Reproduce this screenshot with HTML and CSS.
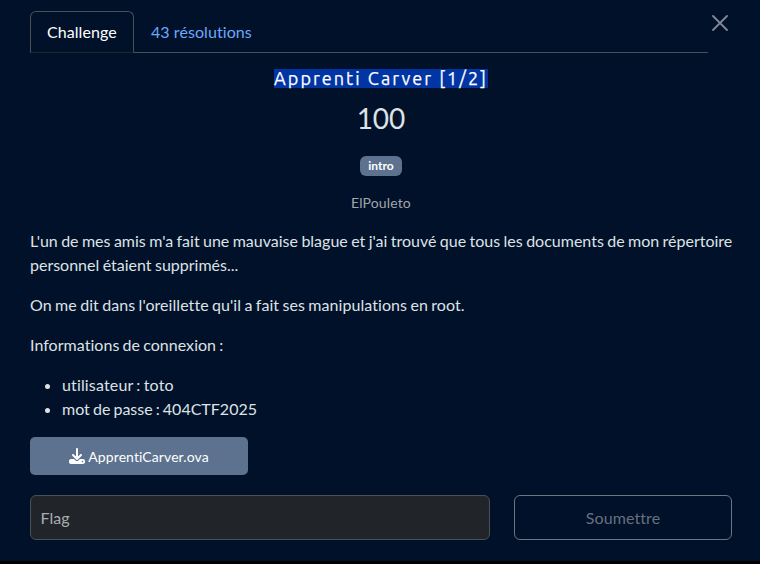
FILE: index.html
```html
<!DOCTYPE html>
<html lang="fr">
<head>
<meta charset="utf-8">
<title>Apprenti Carver</title>
<link rel="stylesheet" href="styles.css">
</head>
<body>
<main class="modal">
  <header class="top">
    <nav class="tabs">
      <a class="tab active">Challenge</a>
      <a class="tab">43 résolutions</a>
    </nav>
    <button class="close" aria-label="Fermer"><svg width="16" height="16" viewBox="0 0 16 16"><path d="M1 1 15 15M15 1 1 15" stroke="currentColor" stroke-width="1.8" stroke-linecap="round"/></svg></button>
  </header>
  <h2 class="name"><span>Apprenti Carver [1/2]</span></h2>
  <div class="value">100</div>
  <div class="tags"><span class="badge">intro</span></div>
  <div class="author">ElPouleto</div>
  <section class="desc">
    <p class="intro">L'un de mes amis m'a fait une mauvaise blague et j'ai trouvé que tous les documents de mon répertoire personnel étaient supprimés...</p>
    <p class="hint">On me dit dans l'oreillette qu'il a fait ses manipulations en root.</p>
    <p class="label">Informations de connexion :</p>
    <ul>
      <li class="user">utilisateur : toto</li>
      <li>mot de passe : 404CTF2025</li>
    </ul>
  </section>
  <a class="file"><svg width="16" height="16" viewBox="0 0 512 512"><path fill="currentColor" d="M288 32c0-17.700-14.300-32-32-32s-32 14.300-32 32V274.700l-73.400-73.400c-12.500-12.500-32.800-12.500-45.300 0s-12.500 32.800 0 45.300l128 128c12.500 12.500 32.800 12.500 45.300 0l128-128c12.500-12.500 12.500-32.800 0-45.300s-32.800-12.500-45.300 0L288 274.700V32zM64 352c-35.300 0-64 28.700-64 64v32c0 35.300 28.700 64 64 64H448c35.300 0 64-28.700 64-64V416c0-35.300-28.700-64-64-64H346.500l-45.300 45.300c-25 25-65.500 25-90.500 0L165.500 352H64zm368 56a24 24 0 1 1 0 48 24 24 0 1 1 0-48z"/></svg><span>ApprentiCarver.ova</span></a>
  <form class="submit">
    <input type="text" placeholder="Flag">
    <button type="button">Soumettre</button>
  </form>
</main>
</body>
</html>
```
FILE: styles.css
```css
* { box-sizing: border-box; }
html { background: #000; }
body { margin: 0; font: 16px/24px Lato, sans-serif; font-variant-ligatures: none; color: #dee2e6; }
.modal { height: 561px; padding: 11px 28px 0 30px; background: #001129; }
.top { display: flex; height: 42px; }
.tabs { display: flex; width: 678px; border-bottom: 1px solid #495057; }
.tab { height: 42px; padding: 8px 16px; border: 1px solid transparent; letter-spacing: .07px; color: #6ea8fe; }
.tab.active { width: 104px; color: #fff; border-color: #495057 #495057 #212529; border-radius: 6px 6px 0 0; }
.close { width: 24px; height: 24px; padding: 4px; border: 0; background: none; color: #808893; }
.close svg { display: block; }
.name { margin: 16px 0 0; font: 400 18px/19px Ubuntu, "Noto Sans", sans-serif; letter-spacing: 2.050px; text-align: center; color: #fff; }
.name span { display: inline-block; height: 19px; line-height: 18px; background: #0035a3; -webkit-text-stroke: .25px #fff; }
.value { margin-top: 13px; font-size: 28px; line-height: 34px; text-align: center; }
.tags { display: flex; justify-content: center; margin-top: 21px; }
.badge { height: 20px; padding: 4px 8px; border-radius: 6px; background: #5d728f; color: #fff; font-size: 12px; line-height: 12px; font-weight: 700; }
.author { margin-top: 16px; font-size: 14px; line-height: 21px; letter-spacing: .15px; text-align: center; color: #a0a5ad; }
.desc { margin-top: 16px; word-spacing: -1px; }
.desc p { margin: 0 -3px 16px 0; }
.desc .intro { word-spacing: -.7px; }
.desc .hint { word-spacing: -.8px; letter-spacing: .06px; }
.desc .label { letter-spacing: .04px; }
.desc .user { letter-spacing: .15px; }
.desc ul { margin: 0; padding-left: 32px; }
.file { display: flex; align-items: center; justify-content: center; gap: 3px; width: 218px; height: 38px; margin-top: 16px; border-radius: 5px; background: #5d728f; color: #fff; font-size: 14px; letter-spacing: .09px; }
.file span { padding-top: 1px; }
.submit { display: flex; gap: 24px; margin-top: 20px; }
.submit input { width: 460px; height: 45px; padding: 0 9.500px; border: 1px solid #495057; border-radius: 6px; background: #212529; color: #dee2e6; font: 16px Lato, sans-serif; }
.submit input::placeholder { color: #a9adb1; }
.submit button { flex: 1; height: 45px; border: 1px solid #6c757d; border-radius: 6px; background: none; color: #66707d; font: 16px Lato, sans-serif; font-variant-ligatures: none; letter-spacing: .1px; }
```
